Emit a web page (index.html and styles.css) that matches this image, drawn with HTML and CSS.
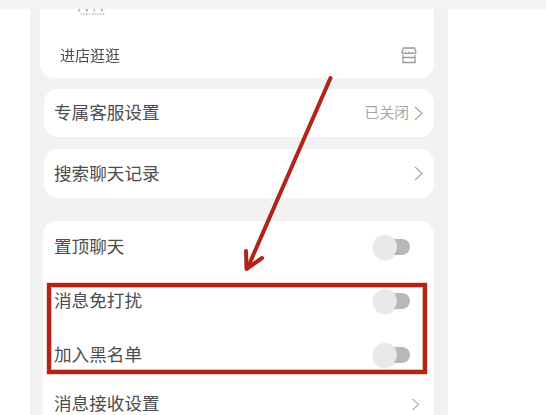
FILE: index.html
```html
<!DOCTYPE html>
<html lang="zh">
<head>
<meta charset="utf-8">
<title>聊天设置</title>
<link rel="stylesheet" href="styles.css">
</head>
<body>
<div class="screen">
  <div class="topbar"></div>
  <main class="panel">
    <section class="card card-shop">
      <div class="logo"><span class="logo-a">品牌名称</span><span class="logo-b">TODY BRAND</span></div>
      <div class="row row-shop">
        <span class="shop-label">进店逛逛</span>
        <svg class="shop-icon" viewBox="0 0 16 17" fill="none" stroke="#9a9a9a" stroke-width="1.3">
          <path d="M2.5 1h11l1.5 4.5c-.6 1.5-2.6 1.5-3.5 0-.8 1.5-3 1.5-3.500 0-.7 1.500-2.900 1.500-3.500 0C3.600 7 1.600 7 1 5.500z"/>
          <path d="M2 8v7.500h12V8M1.500 10.500h13"/>
        </svg>
      </div>
    </section>
    <section class="card card-service">
      <div class="row row-service">
        <span class="label">专属客服设置</span>
        <span class="value">已关闭</span>
        <svg class="chevron" viewBox="0 0 9 15" fill="none" stroke="#a8a8a8" stroke-width="1.2"><path d="M1 1l7 6.500-7 6.500"/></svg>
      </div>
    </section>
    <section class="card card-search">
      <div class="row row-search">
        <span class="label">搜索聊天记录</span>
        <svg class="chevron" viewBox="0 0 9 15" fill="none" stroke="#a8a8a8" stroke-width="1.2"><path d="M1 1l7 6.500-7 6.500"/></svg>
      </div>
    </section>
    <section class="card card-options">
      <div class="row row-option">
        <span class="label">置顶聊天</span>
        <span class="toggle"><span class="knob"></span></span>
      </div>
      <div class="row row-option">
        <span class="label">消息免打扰</span>
        <span class="toggle"><span class="knob"></span></span>
      </div>
      <div class="row row-option">
        <span class="label">加入黑名单</span>
        <span class="toggle"><span class="knob"></span></span>
      </div>
      <div class="row row-last">
        <span class="label">消息接收设置</span>
        <svg class="chevron chevron-last" viewBox="0 0 9 15" fill="none" stroke="#a8a8a8" stroke-width="1.2"><path d="M1 1l7 6.500-7 6.500"/></svg>
      </div>
    </section>
  </main>
  <div class="highlight"></div>
  <svg class="arrow" viewBox="0 0 546 415" fill="none" stroke="#b0241a" stroke-linecap="round" stroke-linejoin="round">
    <path class="arrow-shaft" d="M330.500 78L248 267"/>
    <path class="arrow-head" d="M246 251L246.500 269L262 258"/>
  </svg>
</div>
</body>
</html>
```

FILE: styles.css
```css
* {
  box-sizing: border-box;
}

html,
body {
  margin: 0;
  background: #fff;
}

.screen {
  position: relative;
  width: 546px;
  height: 415px;
  overflow: hidden;
  font-family: "Noto Sans CJK SC", "Noto Sans", sans-serif;
  color: #4d4d4d;
}

.topbar {
  height: 9px;
  background: #f5f5f5;
}

.panel {
  display: flex;
  flex-direction: column;
  width: 418px;
  height: 406px;
  margin-left: 30px;
  padding-right: 14px;
  background: #f2f2f2;
  filter: blur(0.4px);
}

.card {
  flex: none;
  background: #fff;
  border-radius: 14px;
  margin-left: 14px;
}

.card-shop {
  height: 69px;
  margin-left: 10px;
  border-radius: 0 0 14px 14px;
}

.card-service {
  height: 48px;
  margin-top: 11px;
}

.card-search {
  height: 49px;
  margin-top: 12px;
}

.card-options {
  height: 240px;
  margin-top: 23px;
  margin-left: 13px;
}

.logo {
  display: flex;
  flex-direction: column;
  align-items: center;
  gap: 1px;
  width: 32px;
  height: 6px;
  margin-left: 37px;
  line-height: 2.500px;
}

.logo-a {
  font-size: 2.500px;
  letter-spacing: 5px;
  color: #666;
  white-space: nowrap;
}

.logo-b {
  font-size: 2.500px;
  letter-spacing: 1px;
  color: #777;
  white-space: nowrap;
}

.row {
  display: flex;
  align-items: center;
}

.row-shop {
  height: 45px;
  margin-top: 18px;
  padding: 0 17px 0 20px;
}

.row-service {
  height: 48px;
  padding: 0 11px 0 10px;
}

.row-search {
  height: 49px;
  padding: 0 11px 0 10px;
}

.row-option {
  height: 54px;
  padding: 0 24px 0 11px;
}

.row-last {
  height: 44px;
  padding: 0 14px 0 11px;
}

.card-options .row-option:first-child {
  margin-top: -1px;
}

.shop-label {
  flex: 1;
  font-size: 15px;
  line-height: 20px;
  padding-bottom: 1px;
}

.shop-icon {
  width: 16px;
  height: 17px;
}

.label {
  flex: 1;
  font-size: 17.600px;
  line-height: 21px;
  padding-bottom: 3px;
  white-space: nowrap;
}

.value {
  margin-right: 5px;
  font-size: 14.800px;
  line-height: 20px;
  padding-bottom: 2px;
  color: #a6a6a6;
}

.chevron {
  width: 9px;
  height: 15px;
}

.chevron-last {
  height: 13px;
}

.toggle {
  position: relative;
  width: 37px;
  height: 24px;
  display: block;
}

.toggle::before {
  content: "";
  position: absolute;
  top: 4px;
  right: 0;
  width: 26px;
  height: 16px;
  border-radius: 8px;
  background: #b8b8b8;
}

.knob {
  position: absolute;
  top: 0;
  left: 0;
  width: 24px;
  height: 24px;
  border-radius: 50%;
  background: #e9e9e9;
  box-shadow: 0 1px 2px rgba(0, 0, 0, 0.12);
}

.highlight {
  position: absolute;
  left: 47px;
  top: 283px;
  width: 380px;
  height: 91px;
  border: 4px solid #b0241a;
  outline: 1px solid rgba(240, 120, 100, 0.35);
  box-shadow: inset 0 0 0 1px rgba(240, 120, 100, 0.55);
}

.arrow {
  position: absolute;
  left: 0;
  top: 0;
  width: 546px;
  height: 415px;
}

.arrow-shaft {
  stroke-width: 4px;
}

.arrow-head {
  stroke-width: 4px;
}
```
